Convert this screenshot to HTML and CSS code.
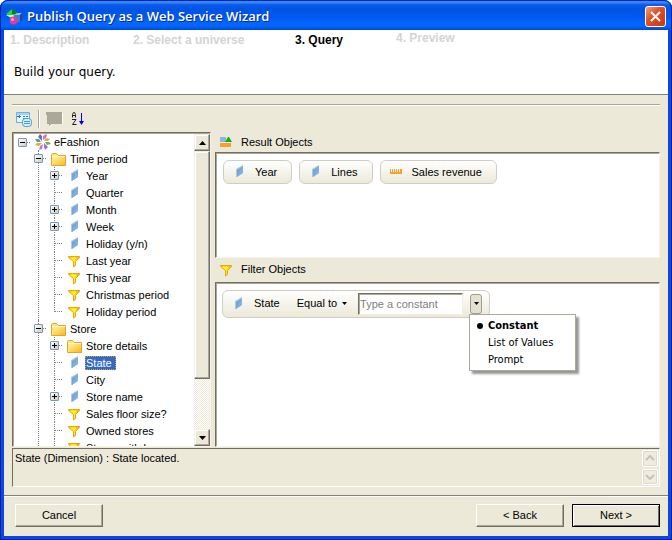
FILE: index.html
```html
<!DOCTYPE html>
<html lang="en">
<head>
  <meta charset="UTF-8" />
  <meta name="viewport" content="width=device-width, initial-scale=1" />
  <title>Publish Query as a Web Service Wizard</title>
  <link rel="stylesheet" href="styles.css">
</head>
<body>

  <!-- shared icons -->
  <svg class="sprite" aria-hidden="true">
    <defs>
      <linearGradient id="blueFill" x1="0" y1="0" x2="1" y2="1">
        <stop offset="0" stop-color="#5a9bd0" />
        <stop offset="1" stop-color="#9dbce6" />
      </linearGradient>
      <linearGradient id="folderFill" x1="0" y1="0" x2="1" y2="1">
        <stop offset="0" stop-color="#fff3a0" />
        <stop offset="1" stop-color="#fbb917" />
      </linearGradient>
      <linearGradient id="funnelFill" x1="0" y1="0" x2="1" y2="0">
        <stop offset="0" stop-color="#ffc400" />
        <stop offset="0.5" stop-color="#fff200" />
        <stop offset="1" stop-color="#f09a10" />
      </linearGradient>
    </defs>
    <symbol id="dimension" viewBox="0 0 16 16">
      <path d="M4 5l7-4v8l-6 4H4z" fill="#a9c9ea" />
      <path d="M5 6l6-4v7l-6 4z" fill="url(#blueFill)" />
    </symbol>
    <symbol id="folder" viewBox="0 0 16 16">
      <path d="M0.500 14.500V3.500l1-1h4l2 2h7v10z" fill="#ffe680" stroke="#e0a52e" />
      <path d="M2 6h12v8H2z" fill="url(#folderFill)" />
      <path d="M1 5.500h13" stroke="#fff8d0" />
    </symbol>
    <symbol id="funnel" viewBox="0 0 16 16">
      <path d="M1.500 3.500h11v1l-4 4v4l-2 1.500v-5.500l-5-4z" fill="url(#funnelFill)" stroke="#e8a51c" />
      <path d="M3 5h7L7 8z" fill="#fff12a" />
    </symbol>
    <symbol id="measure" viewBox="0 0 16 16">
      <path d="M1 5h1v3h1V5h1v3h1V5h1v3h1V5h1v3h1V5h1v3h1V5h2v5H1z" fill="#f7a030" />
    </symbol>
    <symbol id="universe" viewBox="0 0 16 16">
      <g>
        <path d="M7 7L3 3l2-3 2 2z" fill="#7d67b5" />
        <path d="M8 6V2l3-2 1 1-1 3z" fill="#c07cc8" />
        <path d="M9 7l2-3 4 1-2 2z" fill="#f0a040" />
        <path d="M10 8h4l2 2-4 1z" fill="#5fb36a" />
        <path d="M9 9l4 4-3 3-1-3z" fill="#b667c4" />
        <path d="M8 10l-1 5-3 1 1-4z" fill="#9a8ad0" />
        <path d="M7 9l-3 3-4-1 2-2z" fill="#f0a040" />
        <path d="M6 8H2L0 5l4 0z" fill="#4aa39a" />
      </g>
      <circle cx="8" cy="8" r="1.500" fill="#fff" />
    </symbol>
  </svg>

  <div class="window">
    <header class="titlebar">
      <svg class="app-icon" viewBox="0 0 16 16">
        <path d="M6 0l6 5-6 4-6-4z" fill="#22d43c" />
        <path d="M6 0l6 5H6z" fill="#087a1c" />
        <path d="M0 6h7l3 2-3 2z" fill="#d0f5d4" />
        <path d="M8 6l3-2h5l-2 2z" fill="#8ac7f2" />
        <path d="M8 6h6v7H8z" fill="#3d7fc8" />
        <path d="M14 6l2-2v7l-2 2z" fill="#174a96" />
        <circle cx="7.500" cy="11.500" r="4" fill="#e03d9a" />
        <circle cx="6.500" cy="10.500" r="1.500" fill="#f7a6d2" />
      </svg>
      <h1>Publish Query as a Web Service Wizard</h1>
      <button class="close-btn" type="button" aria-label="Close">
        <svg viewBox="0 0 19 19"><path d="M5 5l9 9M14 5l-9 9" stroke="#fff" stroke-width="2" /></svg>
      </button>
    </header>

    <div class="intro">
      <ol class="steps">
        <li>1. Description</li>
        <li>2. Select a universe</li>
        <li class="current">3. Query</li>
        <li class="last">4. Preview</li>
      </ol>
      <p>Build your query.</p>
    </div>

    <main class="content">
      <div class="toolbar">
        <button type="button" aria-label="Show objects">
          <svg viewBox="0 0 16 16">
            <path d="M0.500 1.500h13v10H0.500z" fill="#eaf6ff" stroke="#65b3e6" />
            <path d="M1 2h12v2H1z" fill="#9fd4f5" />
            <path d="M1 5.500h4M3.500 4v3M7 5.500h2M10 5.500h2M7 7.500h2" stroke="#2c78bd" />
            <rect x="6.500" y="7.500" width="9" height="8" rx="3" fill="#d6eeff" stroke="#4a9bd8" />
            <path d="M8 10.500h6M8 12.500h6" stroke="#4a9bd8" />
          </svg>
        </button>
        <span class="separator"></span>
        <button class="wide" type="button" aria-label="Comment" disabled>
          <svg viewBox="0 0 18 16">
            <path d="M1 2h16v11H7l-3 3v-3H2V4H1z" fill="#fff" />
            <path d="M0 1h16v12H6l-3 2v-2H1V4H0z" fill="#aca899" />
          </svg>
        </button>
        <button type="button" aria-label="Sort A to Z">
          <svg viewBox="0 0 16 16">
            <path d="M2.500 6.500V3.500l1-2h1l1 2v3M2.500 4.500h3M2 8.500h4L2.500 13.500H6.500" fill="none" stroke="#222" />
            <path d="M11.500 2v10" stroke="#0000f0" />
            <path d="M9 10h5l-2.500 4z" fill="#0000f0" />
          </svg>
        </button>
      </div>

      <div class="query">
        <section class="tree-panel">
          <ul class="tree">
            <li>
              <div class="row"><button class="toggle open" type="button" aria-label="Collapse"></button><svg class="icon"><use href="#universe" /></svg><span>eFashion</span></div>
              <ul>
                <li>
                  <div class="row"><button class="toggle open" type="button" aria-label="Collapse"></button><svg class="icon"><use href="#folder" /></svg><span>Time period</span></div>
                  <ul>
                    <li><div class="row"><button class="toggle" type="button" aria-label="Expand"></button><svg class="icon"><use href="#dimension" /></svg><span>Year</span></div></li>
                    <li><div class="row"><svg class="icon"><use href="#dimension" /></svg><span>Quarter</span></div></li>
                    <li><div class="row"><button class="toggle" type="button" aria-label="Expand"></button><svg class="icon"><use href="#dimension" /></svg><span>Month</span></div></li>
                    <li><div class="row"><button class="toggle" type="button" aria-label="Expand"></button><svg class="icon"><use href="#dimension" /></svg><span>Week</span></div></li>
                    <li><div class="row"><svg class="icon"><use href="#dimension" /></svg><span>Holiday (y/n)</span></div></li>
                    <li><div class="row"><svg class="icon"><use href="#funnel" /></svg><span>Last year</span></div></li>
                    <li><div class="row"><svg class="icon"><use href="#funnel" /></svg><span>This year</span></div></li>
                    <li><div class="row"><svg class="icon"><use href="#funnel" /></svg><span>Christmas period</span></div></li>
                    <li><div class="row"><svg class="icon"><use href="#funnel" /></svg><span>Holiday period</span></div></li>
                  </ul>
                </li>
                <li class="more">
                  <div class="row"><button class="toggle open" type="button" aria-label="Collapse"></button><svg class="icon"><use href="#folder" /></svg><span>Store</span></div>
                  <ul>
                    <li><div class="row"><button class="toggle" type="button" aria-label="Expand"></button><svg class="icon"><use href="#folder" /></svg><span>Store details</span></div></li>
                    <li><div class="row"><svg class="icon"><use href="#dimension" /></svg><span class="selected">State</span></div></li>
                    <li><div class="row"><svg class="icon"><use href="#dimension" /></svg><span>City</span></div></li>
                    <li><div class="row"><button class="toggle" type="button" aria-label="Expand"></button><svg class="icon"><use href="#dimension" /></svg><span>Store name</span></div></li>
                    <li><div class="row"><svg class="icon"><use href="#funnel" /></svg><span>Sales floor size?</span></div></li>
                    <li><div class="row"><svg class="icon"><use href="#funnel" /></svg><span>Owned stores</span></div></li>
                    <li class="more"><div class="row"><svg class="icon"><use href="#funnel" /></svg><span>Stores with l</span></div></li>
                  </ul>
                </li>
              </ul>
            </li>
          </ul>
          <div class="scrollbar">
            <button type="button" aria-label="Scroll up"><svg viewBox="0 0 7 4"><path d="M0 4h7L3.500 0z" /></svg></button>
            <div class="thumb"></div>
            <button type="button" aria-label="Scroll down"><svg viewBox="0 0 7 4"><path d="M0 0h7L3.500 4z" /></svg></button>
          </div>
        </section>

        <div class="panels">
          <h2>
            <svg class="icon" viewBox="0 0 16 16">
              <path d="M1 3h6v5H1z" fill="#8ab8e4" />
              <path d="M6 8l3-5h1l3 5z" fill="#12b012" />
              <path d="M1 9h11v4H1z" fill="#f7a030" />
            </svg>
            Result Objects
          </h2>
          <div class="box results">
            <div class="pill"><svg class="icon"><use href="#dimension" /></svg>Year</div>
            <div class="pill"><svg class="icon"><use href="#dimension" /></svg>Lines</div>
            <div class="pill"><svg class="icon"><use href="#measure" /></svg>Sales revenue</div>
          </div>

          <h2><svg class="icon"><use href="#funnel" /></svg>Filter Objects</h2>
          <div class="box filters">
            <div class="pill filter">
              <svg class="icon"><use href="#dimension" /></svg>
              <label for="constant">State</label>
              <button class="operator" type="button">Equal to <svg viewBox="0 0 5 3"><path d="M0 0h5L2.500 3z" /></svg></button>
              <input type="text" id="constant" placeholder="Type a constant" />
              <div class="operand">
                <button type="button" aria-label="Operand type"><svg viewBox="0 0 5 3"><path d="M0 0h5L2.500 3z" /></svg></button>
                <ul class="menu">
                  <li class="checked">Constant</li>
                  <li>List of Values</li>
                  <li>Prompt</li>
                </ul>
              </div>
            </div>
          </div>
        </div>
      </div>

      <div class="status">
        <p>State (Dimension) : State located.</p>
        <div class="status-scroll">
          <button type="button" aria-label="Scroll up" disabled><svg viewBox="0 0 10 6"><path d="M1 5l4-4 4 4" /></svg></button>
          <button type="button" aria-label="Scroll down" disabled><svg viewBox="0 0 10 6"><path d="M1 1l4 4 4-4" /></svg></button>
        </div>
      </div>
    </main>

    <footer class="footer">
      <button class="btn cancel" type="button">Cancel</button>
      <button class="btn" type="button">&lt; Back</button>
      <button class="btn default" type="button">Next &gt;</button>
    </footer>
  </div>

</body>
</html>
```
FILE: styles.css
```css
* {
  box-sizing: border-box;
}
body {
  margin: 0;
  background: #fff;
  font-family: "Liberation Sans", Arial, sans-serif;
  font-size: 11px;
  line-height: 17px;
  color: #000;
}
h1, h2, p, ul, ol {
  margin: 0;
  padding: 0;
  list-style: none;
}
button, input {
  font: inherit;
  color: inherit;
  padding: 0;
  border: none;
  background: none;
}
.sprite {
  position: absolute;
  width: 0;
  height: 0;
}
.icon {
  width: 16px;
  height: 16px;
  flex: none;
}

/* window frame */
.window {
  display: flex;
  flex-direction: column;
  height: 100vh;
  min-height: 500px;
  border: 4px solid #0a48e0;
  border-top: none;
  border-radius: 8px 8px 0 0;
  background: #ece9d8;
  background-clip: padding-box;
  outline: 1px solid #001ea0;
  outline-offset: -1px;
}
.titlebar {
  display: flex;
  align-items: center;
  flex: none;
  height: 30px;
  margin: 0 -4px;
  padding: 3px 6px 0 6px;
  border-radius: 8px 8px 0 0;
  background: linear-gradient(#0050c8 0, #3b94ff 6%, #0a5ce8 16%, #0054e3 30%, #0058ee 55%, #0066ff 75%, #0066ff 88%, #0046d0 100%);
}
.app-icon {
  width: 16px;
  height: 16px;
}
.titlebar h1 {
  flex: 1;
  margin-left: 5px;
  font-family: "Open Sans", "Noto Sans", sans-serif;
  font-size: 13px;
  font-weight: 600;
  color: #fff;
  text-shadow: 1px 1px #0a2a8c;
}
.close-btn {
  width: 21px;
  height: 21px;
  border: 1px solid #fff;
  border-radius: 3px;
  background: linear-gradient(135deg, #f0a080, #e0532c 40%, #c8360c);
}
.close-btn svg {
  display: block;
}

/* wizard steps */
.intro {
  flex: none;
  height: 65px;
  background: #fff;
  border-bottom: 1px solid #808080;
}
.steps {
  display: grid;
  grid-template-columns: 123px 162px 101px auto;
  padding: 2px 6px 0;
  font-size: 12px;
  font-weight: bold;
  color: #d4d4d4;
}
.steps .current {
  color: #000;
}
.steps .last {
  margin-top: -2px;
}
.intro p {
  margin: 15px 10px 0;
  font-family: "DejaVu Sans", Verdana, sans-serif;
  font-size: 12px;
}

/* main area */
.content {
  display: flex;
  flex-direction: column;
  flex: 1;
  min-height: 0;
  margin: 9px 8px 8px;
  border-top: 1px solid #aca899;
}
.toolbar {
  display: flex;
  align-items: center;
  flex: none;
  height: 27px;
  padding-left: 4px;
  border-top: 1px solid #fff;
}
.toolbar button {
  width: 16px;
  height: 16px;
}
.toolbar .wide {
  width: 18px;
  margin: 0 6px 0 6px;
}
.toolbar svg {
  display: block;
}
.separator {
  width: 2px;
  height: 18px;
  margin-left: 6px;
  border-left: 1px solid #aca899;
  border-right: 1px solid #fff;
}
.query {
  display: flex;
  gap: 4px;
  flex: 1;
  min-height: 0;
}
.tree-panel,
.box {
  border: 1px solid #716f64;
  border-right-color: #f5f3ea;
  border-bottom-color: #f5f3ea;
  box-shadow: inset 1px 1px #aca899;
  background: #fff;
}

/* object tree */
.tree-panel {
  display: flex;
  flex: none;
  width: 199px;
  padding: 1px 0 0 1px;
  overflow: hidden;
}
.tree {
  flex: 1;
  overflow: hidden;
  padding-left: 4px;
}
.tree ul {
  padding-left: 16px;
}
.tree li {
  position: relative;
}
.row {
  position: relative;
  display: flex;
  align-items: center;
  justify-content: flex-start;
  height: 17px;
  padding-left: 17px;
  white-space: nowrap;
}
.tree > li > .row {
  height: 16px;
}
.row span {
  margin-left: 2px;
  padding: 0 1px;
  line-height: 14px;
}
.row .selected {
  padding-right: 4px;
  background: #316ac5;
  color: #fff;
  outline: 1px dotted #d0a050;
  outline-offset: -1px;
}
.row::before {
  content: "";
  position: absolute;
  left: 5px;
  top: 8px;
  width: 7px;
  border-top: 1px dotted #808080;
}
.tree ul > li::before {
  content: "";
  position: absolute;
  left: 4px;
  top: 0;
  bottom: 0;
  border-left: 1px dotted #808080;
}
.tree ul > li:last-child:not(.more)::before {
  bottom: auto;
  height: 9px;
}
.toggle {
  position: absolute;
  left: 0;
  top: 4px;
  width: 9px;
  height: 9px;
  border: 1px solid #7898b5;
  border-radius: 1px;
  background:
    linear-gradient(#000, #000) center / 5px 1px no-repeat,
    linear-gradient(#000, #000) center / 1px 5px no-repeat,
    linear-gradient(135deg, #fff, #d0cbbd);
}
.toggle.open {
  background:
    linear-gradient(#000, #000) center / 5px 1px no-repeat,
    linear-gradient(135deg, #fff, #d0cbbd);
}

/* classic scrollbar */
.scrollbar {
  display: flex;
  flex-direction: column;
  flex: none;
  width: 16px;
  background: repeating-conic-gradient(#fff 0 25%, #ece9d8 0 50%) 0 0 / 2px 2px;
}
.scrollbar button,
.thumb {
  border: 1px solid;
  border-color: #f1efe2 #716f64 #716f64 #f1efe2;
  box-shadow: inset -1px -1px #aca899, inset 1px 1px #fff;
  background: #ece9d8;
}
.scrollbar button {
  flex: none;
  height: 17px;
}
.scrollbar svg {
  display: block;
  width: 7px;
  height: 4px;
  margin: 0 auto;
}
.thumb {
  height: 73%;
  margin-bottom: auto;
}

/* result and filter panels */
.panels {
  display: flex;
  flex-direction: column;
  flex: 1;
  min-width: 0;
}
.panels h2 {
  display: flex;
  align-items: center;
  flex: none;
  gap: 6px;
  height: 24px;
  padding-left: 4px;
  font-size: 11px;
  font-weight: normal;
}
.panels h2:first-child {
  height: 20px;
}
.box {
  padding: 7px;
}
.results {
  display: flex;
  align-items: flex-start;
  gap: 7px;
  flex: 3;
}
.filters {
  flex: 5;
  padding-left: 6px;
}
.pill {
  display: flex;
  align-items: center;
  gap: 7px;
  height: 24px;
  padding: 0 14px 0 8px;
  border: 1px solid #d0cec4;
  border-radius: 6px;
  background: linear-gradient(#fff, #ece9d8);
}
.filter {
  width: 268px;
  height: 28px;
  padding-right: 7px;
}
.operator {
  display: flex;
  align-items: center;
  gap: 5px;
  margin-left: 10px;
}
.operator svg,
.operand svg {
  width: 5px;
  height: 3px;
}
.filter input {
  flex: 1;
  min-width: 0;
  height: 22px;
  margin-left: 4px;
  padding: 0 1px;
  border: 1px solid #716f64;
  border-right-color: #f1efe2;
  border-bottom-color: #f1efe2;
  box-shadow: inset 1px 1px #aca899;
  background: #fff;
}
.filter input::placeholder {
  color: #808080;
  opacity: 1;
}
.operand {
  position: relative;
}
.operand button {
  display: flex;
  align-items: center;
  justify-content: center;
  width: 12px;
  height: 20px;
  border: 1px solid #a09e90;
  border-radius: 3px;
  background: #e4e1d2;
}
.menu {
  position: absolute;
  top: 20px;
  left: -1px;
  width: 107px;
  padding: 2px 0 2px 18px;
  border: 1px solid #aca899;
  background: #fff;
  box-shadow: 3px 3px 2px #999;
  font-family: "DejaVu Sans Condensed", Tahoma, sans-serif;
  white-space: nowrap;
}
.menu .checked {
  position: relative;
  font-weight: bold;
}
.menu .checked::before {
  content: "";
  position: absolute;
  left: -11px;
  top: 6px;
  width: 6px;
  height: 6px;
  border-radius: 50%;
  background: #000;
}

/* description of the selected object */
.status {
  display: flex;
  flex: none;
  justify-content: space-between;
  height: 39px;
  margin-top: 1px;
  padding: 1px 1px 1px 2px;
  border: 1px solid #716f64;
  border-right-color: #fff;
  border-bottom-color: #fff;
}
.status-scroll {
  display: flex;
  flex-direction: column;
  gap: 2px;
}
.status-scroll button {
  flex: 1;
  width: 16px;
  border: 1px solid #fff;
  border-radius: 2px;
  background: #eeece1;
  box-shadow: inset 0 0 0 1px #dfdccd;
}
.status-scroll svg {
  display: block;
  width: 10px;
  height: 6px;
  margin: 0 auto;
  fill: none;
  stroke: #c6c3b2;
  stroke-width: 2;
}

/* wizard buttons */
.footer {
  display: flex;
  flex: none;
  gap: 8px;
  height: 41px;
  padding: 8px 8px 0 11px;
  border-top: 1px solid #808080;
  box-shadow: inset 0 1px #fff;
}
.btn {
  width: 88px;
  height: 23px;
  border: 1px solid;
  border-color: #fff #716f64 #716f64 #fff;
  box-shadow: inset -1px -1px #aca899;
  background: #ece9d8;
}
.cancel {
  margin-right: auto;
}
.default {
  border-color: #000;
  box-shadow: inset 1px 1px #fff, inset -1px -1px #716f64;
}
```
